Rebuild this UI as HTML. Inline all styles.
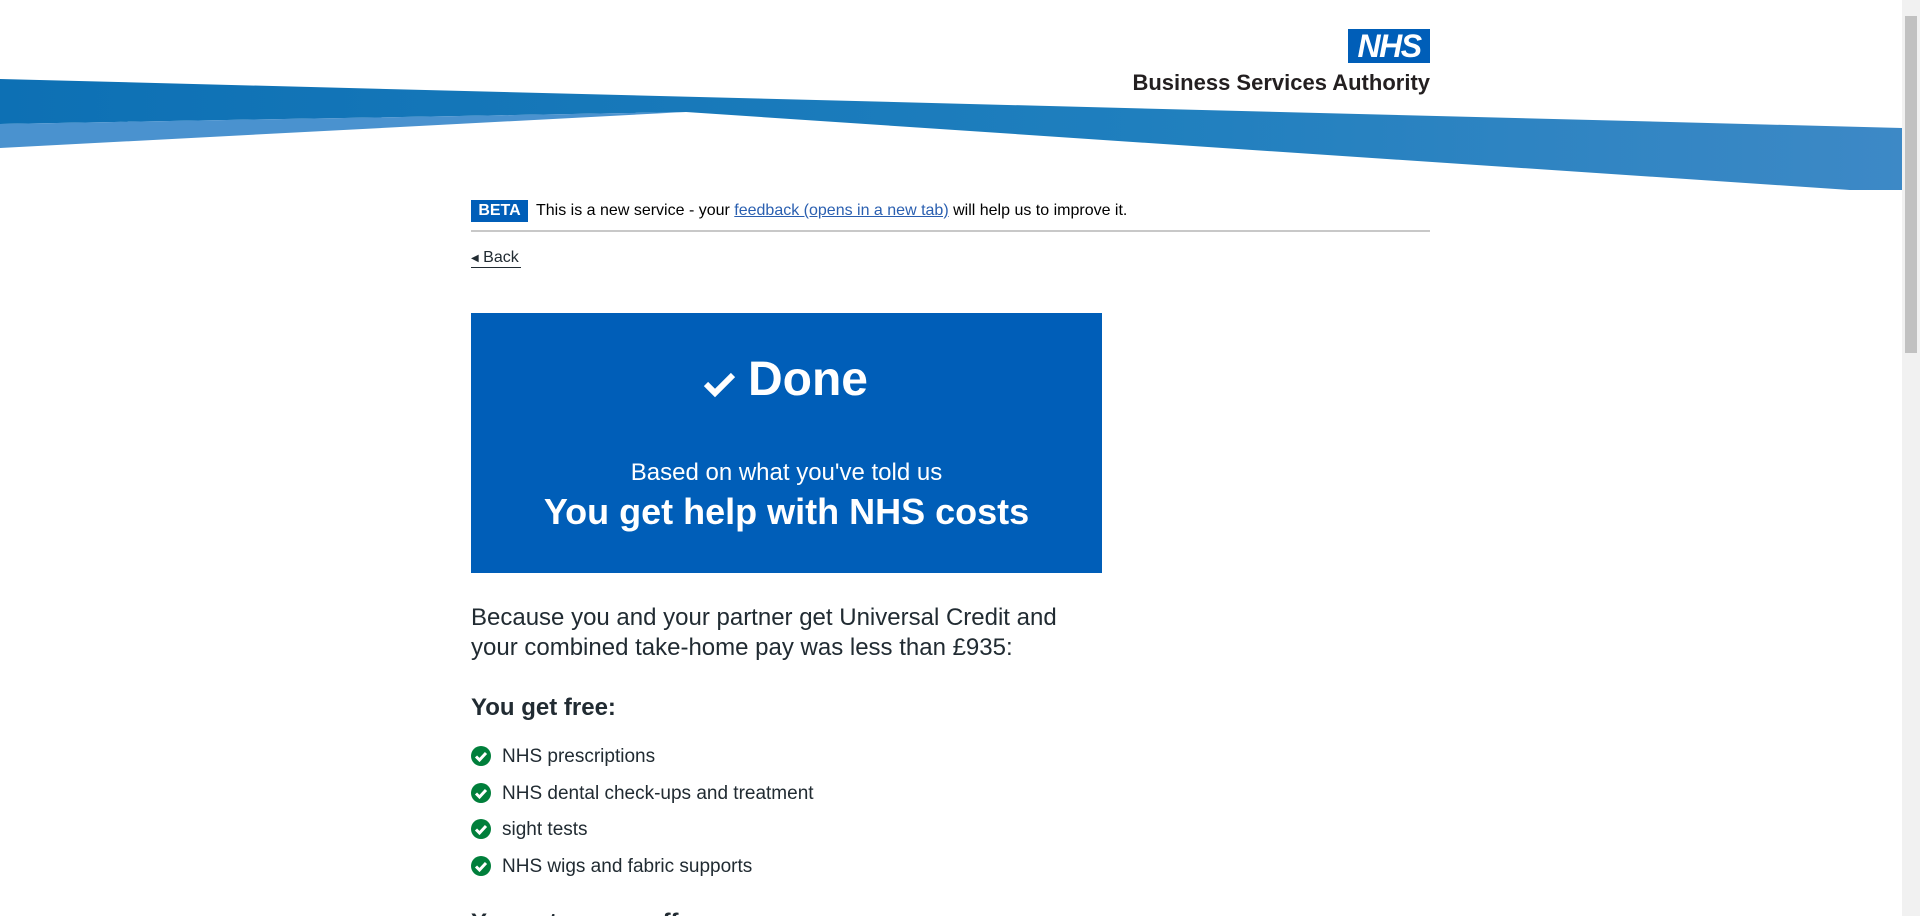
<!DOCTYPE html>
<html><head><meta charset="utf-8"><style>
*{margin:0;padding:0;box-sizing:border-box}
html,body{width:1920px;height:916px;overflow:hidden}
body{background:#fff;font-family:"Liberation Sans",Arial,sans-serif;color:#212b32;position:relative}
.a{position:absolute;white-space:nowrap}
</style></head><body>
<svg class="a" style="left:0;top:0" width="1902" height="200" viewBox="0 0 1902 200">
<defs><linearGradient id="g" x1="0" x2="1"><stop offset="0" stop-color="#0d70b4"/><stop offset="0.6" stop-color="#1f7fbe"/><stop offset="1" stop-color="#3d89c6"/></linearGradient></defs>
<polygon points="0,79 1902,128 1902,190 1850,190 686,112 0,124" fill="url(#g)"/>
<polygon points="0,124 686,112 0,148" fill="#4a92cf"/>
</svg>
<div class="a" style="left:1348px;top:29px;width:82px;height:34px;background:#005eb8;color:#fff;font-weight:bold;font-style:italic;font-size:32px;line-height:34px;text-align:center;letter-spacing:-1.5px">NHS</div>
<div class="a" style="left:1100px;top:70px;width:330px;text-align:right;font-weight:bold;font-size:22px;color:#231f20">Business Services Authority</div>
<div class="a" style="left:1902px;top:0;width:18px;height:916px;background:#f1f1f1"></div>
<div class="a" style="left:1905px;top:16px;width:12px;height:337px;background:#c1c1c1"></div>
<div class="a" style="left:471px;top:200px;width:57px;height:22px;background:#005eb8;color:#fff;font-weight:bold;font-size:16px;line-height:22px;text-align:center">BETA</div>
<div class="a" style="left:536px;top:201px;font-size:16px;line-height:20px;color:#000">This is a new service - your <span style="color:#2a5fb0;text-decoration:underline">feedback (opens in a new tab)</span> will help us to improve it.</div>
<div class="a" style="left:471px;top:230px;width:959px;height:2px;background:#c8c8c8"></div>
<div class="a" style="left:471px;top:248px;font-size:16px;line-height:20px;color:#212b32"><span style="font-size:10px;vertical-align:1px">&#9664;</span> Back</div>
<div class="a" style="left:471px;top:267px;width:50px;height:1px;background:#212b32"></div>
<div class="a" style="left:471px;top:313px;width:631px;height:260px;background:#005eb8"></div>
<svg class="a" style="left:703px;top:370px" width="33" height="28" viewBox="0 0 33 28"><path d="M3 14 L12 23 L30 5" stroke="#fff" stroke-width="6" fill="none"/></svg>
<div class="a" style="left:748px;top:352px;font-size:48px;font-weight:bold;color:#fff;line-height:56px">Done</div>
<div class="a" style="left:471px;top:459px;width:631px;text-align:center;font-size:24px;color:#fff;line-height:28px">Based on what you've told us</div>
<div class="a" style="left:471px;top:491px;width:631px;text-align:center;font-size:36px;font-weight:bold;color:#fff;line-height:42px">You get help with NHS costs</div>
<div class="a" style="left:471px;top:603px;font-size:24px;line-height:30px;color:#212b32">Because you and your partner get Universal Credit and<br>your combined take-home pay was less than £935:</div>
<div class="a" style="left:471px;top:694px;font-size:24px;font-weight:bold;line-height:28px">You get free:</div>
<div class="a" style="left:471px;top:739px;font-size:19px;line-height:36.7px">
<div><svg width="20" height="20" viewBox="0 0 20 20" style="vertical-align:-4px;margin-right:11px"><circle cx="10" cy="10" r="10" fill="#007f3b"/><path d="M5 10.5 L8.5 14 L15 7" stroke="#fff" stroke-width="3" fill="none"/></svg>NHS prescriptions</div>
<div><svg width="20" height="20" viewBox="0 0 20 20" style="vertical-align:-4px;margin-right:11px"><circle cx="10" cy="10" r="10" fill="#007f3b"/><path d="M5 10.5 L8.5 14 L15 7" stroke="#fff" stroke-width="3" fill="none"/></svg>NHS dental check-ups and treatment</div>
<div><svg width="20" height="20" viewBox="0 0 20 20" style="vertical-align:-4px;margin-right:11px"><circle cx="10" cy="10" r="10" fill="#007f3b"/><path d="M5 10.5 L8.5 14 L15 7" stroke="#fff" stroke-width="3" fill="none"/></svg>sight tests</div>
<div><svg width="20" height="20" viewBox="0 0 20 20" style="vertical-align:-4px;margin-right:11px"><circle cx="10" cy="10" r="10" fill="#007f3b"/><path d="M5 10.5 L8.5 14 L15 7" stroke="#fff" stroke-width="3" fill="none"/></svg>NHS wigs and fabric supports</div>
</div>
<div class="a" style="left:471px;top:909px;font-size:24px;font-weight:bold;line-height:28px">You get money off:</div>
</body></html>
